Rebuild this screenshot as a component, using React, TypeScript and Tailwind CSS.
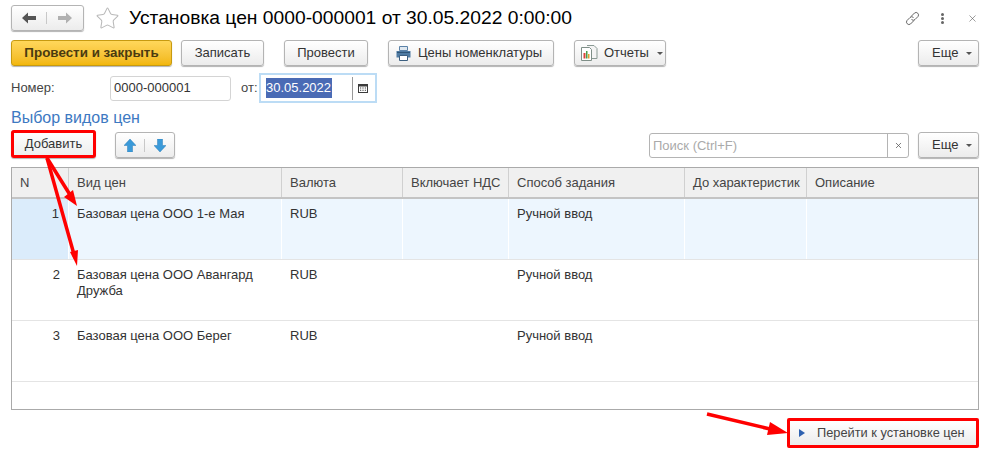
import { Star, X } from "lucide-react";
import type { ReactNode } from "react";

const btn =
  "flex h-[26px] items-center justify-center rounded-[3px] border border-[#b4b4b4] bg-gradient-to-b from-white to-[#ececec] text-[#333] shadow-[0_1px_1px_rgba(0,0,0,0.3)]";

const columns = [
  { title: "N", width: "w-[57px]" },
  { title: "Вид цен", width: "w-[213px]" },
  { title: "Валюта", width: "w-[121px]" },
  { title: "Включает НДС", width: "w-[106px]" },
  { title: "Способ задания", width: "w-[176px]" },
  { title: "До характеристик", width: "w-[122px]" },
  { title: "Описание", width: "flex-1" },
];

const rows = [
  { n: "1", name: "Базовая цена ООО 1-е Мая" },
  { n: "2", name: "Базовая цена ООО Авангард Дружба" },
  { n: "3", name: "Базовая цена ООО Берег" },
];

function Caret() {
  return <span className="ml-[8px] mt-[1px] h-0 w-0 border-x-[3px] border-t-[3px] border-x-transparent border-t-[#555]" />;
}

function Button({ className, children }: { className: string; children: ReactNode }) {
  return <div className={`${btn} ${className}`}>{children}</div>;
}

function NavArrow({ color, flip }: { color: string; flip?: boolean }) {
  return (
    <svg width="14" height="12" viewBox="0 0 14 12" className={flip ? "rotate-180" : ""}>
      <path d="M0 6L6 0.500V4H14V8H6V11.500z" fill={color} />
    </svg>
  );
}

function MoveArrow({ flip }: { flip?: boolean }) {
  return (
    <svg width="12" height="13" viewBox="0 0 12 13" className={flip ? "rotate-180" : ""}>
      <path d="M6 0L12 6.500H8.500V13H3.500V6.500H0z" fill="#3a9ad9" stroke="#2f7fb8" strokeWidth="0.5" />
    </svg>
  );
}

function PrinterIcon() {
  return (
    <svg width="15" height="15" viewBox="0 0 15 15" className="mr-[7px]">
      <path d="M3.500 0.500h8v4h-8z" fill="#dfe8f0" stroke="#5b82a8" />
      <path d="M0.500 5h14v6.500H0.500z" fill="#4f7ba3" />
      <path d="M1 6.500h13" stroke="#2f5578" />
      <path d="M3.500 9.500h8v5h-8z" fill="#fff" stroke="#3c5f80" />
    </svg>
  );
}

function ReportIcon() {
  return (
    <svg width="17" height="16" viewBox="0 0 17 16" className="mr-[6px]">
      <path d="M6 0.500h7l3 3v10h-5" fill="#f4f4f4" stroke="#8a9a94" />
      <path d="M0.500 2.500h8l2 2v11h-10z" fill="#fff" stroke="#7f8f88" />
      <path d="M2.500 8h2v5.500h-2z" fill="#d9453a" />
      <path d="M5 6h1.500v7.500H5z" fill="#4aa04a" />
      <path d="M7 9h1.500v4.500H7z" fill="#e0a030" />
    </svg>
  );
}

function CalendarIcon() {
  return (
    <svg width="10" height="10" viewBox="0 0 10 10">
      <path d="M0 1h10v9H0z" fill="#3c3c3c" />
      <path d="M1 3.500h8v5.500H1z" fill="#fff" />
      <path d="M2 4.500h1.200v1H2zM4.400 4.500h1.200v1H4.400zM6.800 4.500h1.200v1H6.800zM2 6.800h1.200v1H2zM4.400 6.800h1.200v1H4.400zM6.800 6.800h1.200v1H6.800z" fill="#3c3c3c" />
    </svg>
  );
}

function ChainIcon() {
  return (
    <svg width="17" height="17" viewBox="0 0 17 17" fill="none" stroke="#666" strokeWidth="1">
      <path d="M7 6.500L10.500 3a2.500 2.500 0 0 1 3.500 3.500L11 9.500a2.500 2.500 0 0 1-3.500 0" />
      <path d="M10 10.500L6.500 14a2.500 2.500 0 0 1-3.500-3.500L6 7.500a2.500 2.500 0 0 1 3.500 0" />
    </svg>
  );
}

function Cell({ className, children }: { className: string; children?: ReactNode }) {
  return <div className={`shrink-0 pt-[7px] leading-[16px] ${className}`}>{children}</div>;
}

export default function App() {
  return (
    <div className="relative h-[453px] w-[985px] overflow-hidden bg-white font-['Liberation_Sans',Arial,sans-serif] text-[13px] text-[#333]">
      <div className="flex flex-col pl-[11px] pr-[6px] pt-[6px]">
        {/* title bar */}
        <div className="flex h-[24px] items-center">
          <div className={`${btn} h-[24px] w-[73px]`}>
            <div className="flex flex-1 justify-center border-r border-[#c8c8c8]">
              <NavArrow color="#555" />
            </div>
            <div className="flex w-[36px] justify-center">
              <NavArrow color="#b0b0b0" flip />
            </div>
          </div>
          <Star size={25} strokeWidth={1} color="#b9b9b9" className="ml-[11px]" />
          <h1 className="ml-[9px] text-[19.25px] leading-[24px] text-black">Установка цен 0000-000001 от 30.05.2022 0:00:00</h1>
          <div className="ml-auto flex items-center">
            <ChainIcon />
            <div className="ml-[20px] flex flex-col gap-[1px]">
              <span className="h-[3px] w-[3px] rounded-full bg-[#666]" />
              <span className="h-[3px] w-[3px] rounded-full bg-[#666]" />
              <span className="h-[3px] w-[3px] rounded-full bg-[#666]" />
            </div>
            <X size={11} strokeWidth={1.25} color="#555" className="ml-[23px] mr-[1px]" />
          </div>
        </div>

        {/* command bar */}
        <div className="mt-[10px] flex items-center">
          <div className="flex h-[26px] w-[161px] items-center justify-center rounded-[3px] border border-[#c79a10] bg-gradient-to-b from-[#ffd75a] to-[#f2b707] text-[13.4px] font-bold text-[#4a3a10] shadow-[0_1px_1px_rgba(0,0,0,0.3)]">
            Провести и закрыть
          </div>
          <Button className="ml-[9px] w-[83px]">Записать</Button>
          <Button className="ml-[20px] w-[84px]">Провести</Button>
          <Button className="ml-[20px] w-[166px] justify-start pl-[7px]">
            <PrinterIcon />
            Цены номенклатуры
          </Button>
          <Button className="ml-[20px] w-[92px] justify-start pl-[6px]">
            <ReportIcon />
            Отчеты
            <Caret />
          </Button>
          <Button className="ml-auto w-[61px] justify-start pl-[13px]">
            Еще
            <Caret />
          </Button>
        </div>

        {/* number and date */}
        <div className="mt-[7px] flex h-[30px] items-center">
          <span className="w-[99px] text-[#444]">Номер:</span>
          <div className="flex h-[25px] w-[121px] items-center rounded-[3px] border border-[#d4d4d4] pl-[3px]">0000-000001</div>
          <span className="ml-[10px] w-[18px] text-[#444]">от:</span>
          <div className="flex h-[30px] w-[118px] items-center border-2 border-[#bcdcf5] pl-[5px]">
            <span className="w-[66px] bg-[#4a6bb5] text-white">30.05.2022</span>
            <div className="ml-[20px] flex h-[23px] items-center border-l border-[#999] pl-[5px]">
              <CalendarIcon />
            </div>
          </div>
        </div>

        <h2 className="mt-[6px] text-[16px] leading-[18px] text-[#3d79c2]">Выбор видов цен</h2>

        {/* table toolbar */}
        <div className="mt-[3px] flex items-end">
          <Button className="h-[28px] w-[85px] outline-[3px] -outline-offset-[3px] outline-[#f00] outline">Добавить</Button>
          <div className={`${btn} ml-[19px] w-[60px]`}>
            <div className="flex flex-1 justify-center border-r border-[#c8c8c8]">
              <MoveArrow />
            </div>
            <div className="flex w-[29px] justify-center">
              <MoveArrow flip />
            </div>
          </div>
          <div className="ml-auto flex h-[25px] w-[260px] items-center rounded-[3px] border border-[#b4b4b4]">
            <span className="flex-1 pl-[3px] text-[#aaa]">Поиск (Ctrl+F)</span>
            <div className="flex h-full w-[21px] items-center justify-center border-l border-[#b4b4b4]">
              <X size={9} strokeWidth={2} color="#555" />
            </div>
          </div>
          <Button className="ml-[9px] w-[61px] justify-start pl-[13px]">
            Еще
            <Caret />
          </Button>
        </div>

        {/* table */}
        <div className="mt-[9px] h-[243px] border border-[#aaa]">
          <div className="flex h-[31px] border-b-2 border-[#c4c4c4] bg-[#f0f0f0] text-[#444]">
            {columns.map((c) => (
              <div key={c.title} className={`flex items-center border-r border-[#d0d0d0] pl-[8px] last:border-r-0 ${c.width}`}>
                {c.title}
              </div>
            ))}
          </div>
          {rows.map((row, i) => (
            <div key={row.n} className={`flex h-[61px] border-b border-[#e4e4e4] ${i === 0 ? "bg-[#edf6fe]" : ""}`}>
              <Cell className={`w-[57px] pr-[9px] text-right ${i === 0 ? "border-r border-white bg-[#dbecfb]" : ""}`}>{row.n}</Cell>
              <Cell className={`w-[213px] pl-[8px] pr-[8px] ${i === 0 ? "border-r border-white" : ""}`}>{row.name}</Cell>
              <Cell className={`w-[121px] pl-[8px] ${i === 0 ? "border-r border-white" : ""}`}>RUB</Cell>
              <Cell className={`w-[106px] ${i === 0 ? "border-r border-white" : ""}`} />
              <Cell className={`w-[176px] pl-[8px] ${i === 0 ? "border-r border-white" : ""}`}>Ручной ввод</Cell>
              <Cell className={`w-[122px] ${i === 0 ? "border-r border-white" : ""}`} />
            </div>
          ))}
        </div>

        <div className="mt-[8px] flex justify-end">
          <div className="flex h-[30px] w-[192px] items-center rounded-[2px] border-[3px] border-[#f00] bg-gradient-to-b from-white to-[#ececec] pl-[9px]">
            <span className="h-0 w-0 border-y-[4px] border-l-[6px] border-y-transparent border-l-[#2f62b0]" />
            <span className="ml-[12px] text-[12.8px] text-[#444]">Перейти к установке цен</span>
          </div>
        </div>
      </div>

      {/* annotation arrows */}
      <svg className="pointer-events-none absolute inset-0" width="985" height="453">
        <g stroke="#f00" strokeWidth="3.5" fill="#f00">
          <path d="M47 158L72 198" />
          <path d="M47 158L75 258" />
          <path d="M707 414L770 429" />
        </g>
        <g fill="#f00">
          <path d="M77 206L64 197L73 190z" />
          <path d="M77 266L70 252L78 250z" />
          <path d="M788 433L770 422L767 435z" />
        </g>
      </svg>
    </div>
  );
}
